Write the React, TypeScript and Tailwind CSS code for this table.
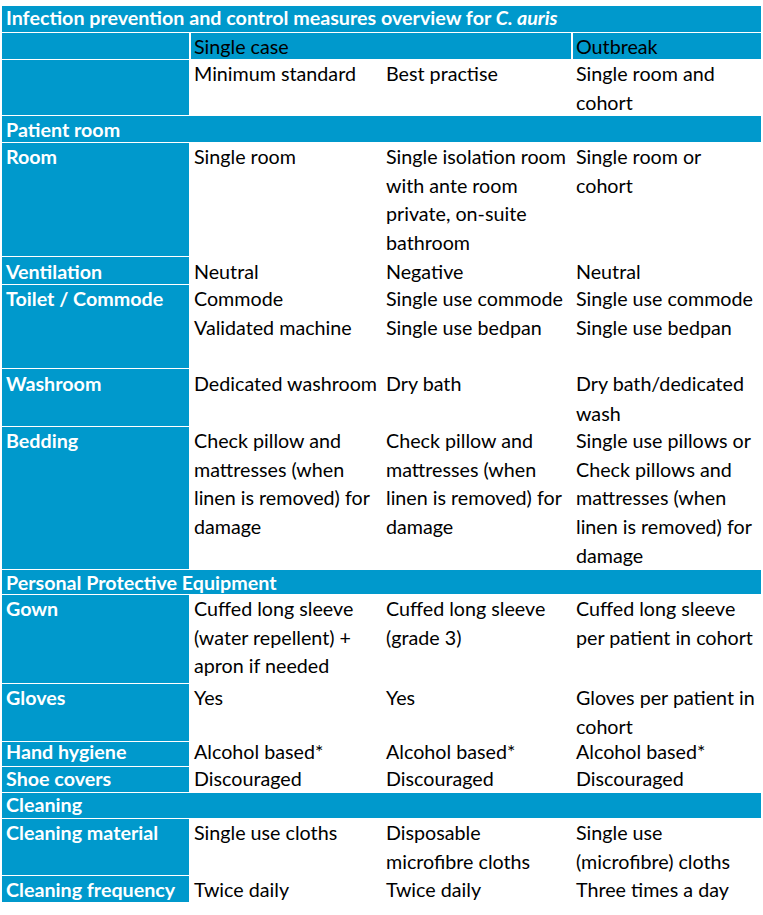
import React from "react";

type Row =
  | { kind: "section"; h: string; lead: string; title: React.ReactNode }
  | { kind: "data"; h: string; lead: string; label: string; cells: string[][] };

const rows: Row[] = [
  { kind: "section", h: "h-[26px]", lead: "leading-[28px]", title: "Patient room" },
  {
    kind: "data",
    h: "h-[113px]",
    lead: "leading-[28.7px]",
    label: "Room",
    cells: [
      ["Single room"],
      ["Single isolation room", "with ante room", "private, on-suite", "bathroom"],
      ["Single room or", "cohort"],
    ],
  },
  { kind: "data", h: "h-[27px]", lead: "leading-[29px]", label: "Ventilation", cells: [["Neutral"], ["Negative"], ["Neutral"]] },
  {
    kind: "data",
    h: "h-[83px]",
    lead: "leading-[28.7px]",
    label: "Toilet / Commode",
    cells: [
      ["Commode", "Validated machine"],
      ["Single use commode", "Single use bedpan"],
      ["Single use commode", "Single use bedpan"],
    ],
  },
  {
    kind: "data",
    h: "h-[57px]",
    lead: "leading-[29.5px]",
    label: "Washroom",
    cells: [["Dedicated washroom"], ["Dry bath"], ["Dry bath/dedicated", "wash"]],
  },
  {
    kind: "data",
    h: "h-[142px]",
    lead: "leading-[28.7px]",
    label: "Bedding",
    cells: [
      ["Check pillow and", "mattresses (when", "linen is removed) for", "damage"],
      ["Check pillow and", "mattresses (when", "linen is removed) for", "damage"],
      ["Single use pillows or", "Check pillows and", "mattresses (when", "linen is removed) for", "damage"],
    ],
  },
  { kind: "section", h: "h-[24px]", lead: "leading-[25px]", title: "Personal Protective Equipment" },
  {
    kind: "data",
    h: "h-[88px]",
    lead: "leading-[28.7px]",
    label: "Gown",
    cells: [
      ["Cuffed long sleeve", "(water repellent) +", "apron if needed"],
      ["Cuffed long sleeve", "(grade 3)"],
      ["Cuffed long sleeve", "per patient in cohort"],
    ],
  },
  {
    kind: "data",
    h: "h-[57px]",
    lead: "leading-[28.7px]",
    label: "Gloves",
    cells: [["Yes"], ["Yes"], ["Gloves per patient in", "cohort"]],
  },
  {
    kind: "data",
    h: "h-[24px]",
    lead: "leading-[20px]",
    label: "Hand hygiene",
    cells: [["Alcohol based*"], ["Alcohol based*"], ["Alcohol based*"]],
  },
  {
    kind: "data",
    h: "h-[25px]",
    lead: "leading-[24px]",
    label: "Shoe covers",
    cells: [["Discouraged"], ["Discouraged"], ["Discouraged"]],
  },
  { kind: "section", h: "h-[25px]", lead: "leading-[24px]", title: "Cleaning" },
  {
    kind: "data",
    h: "h-[56px]",
    lead: "leading-[28.7px]",
    label: "Cleaning material",
    cells: [["Single use cloths"], ["Disposable", "microfibre cloths"], ["Single use", "(microfibre) cloths"]],
  },
  {
    kind: "data",
    h: "h-[26px]",
    lead: "leading-[28px]",
    label: "Cleaning frequency",
    cells: [["Twice daily"], ["Twice daily"], ["Three times a day"]],
  },
];

const grid = "grid grid-cols-[187px_189px_189px_188px] grid-rows-1 gap-x-[2px]";

function Lines({ lines }: { lines: string[] }) {
  return (
    <>
      {lines.map((l, i) => (
        <div key={i} className="whitespace-nowrap">
          {l}
        </div>
      ))}
    </>
  );
}

export default function App() {
  return (
    <div className="w-[763px] h-[915px] bg-white pt-[6px] pl-[2px] font-['Lato',sans-serif] text-[19.7px] text-black">
      <div className="flex flex-col gap-y-px w-[759px]">
        <div className="h-[26px] bg-[#0099cc] pl-[4px] leading-[24px] font-bold text-white whitespace-nowrap">
          Infection prevention and control measures overview for <i>C. auris</i>
        </div>
        <div className={`${grid} h-[26px] leading-[28px]`}>
          <div className="bg-[#0099cc]" />
          <div className="col-span-2 bg-[#0099cc] pl-[3px]">Single case</div>
          <div className="bg-[#0099cc] pl-[3px]">Outbreak</div>
        </div>
        <div className={`${grid} h-[55px] leading-[28.7px]`}>
          <div className="bg-[#0099cc]" />
          <div className="pl-[3px]">
            <Lines lines={["Minimum standard"]} />
          </div>
          <div className="pl-[4px]">
            <Lines lines={["Best practise"]} />
          </div>
          <div className="pl-[3px]">
            <Lines lines={["Single room and", "cohort"]} />
          </div>
        </div>
        {rows.map((r, i) =>
          r.kind === "section" ? (
            <div key={i} className={`${r.h} ${r.lead} bg-[#0099cc] pl-[4px] font-bold text-white`}>
              {r.title}
            </div>
          ) : (
            <div key={i} className={`${grid} ${r.h} ${r.lead}`}>
              <div className="min-h-0 bg-[#0099cc] pl-[4px] font-bold text-white whitespace-nowrap">{r.label}</div>
              <div className="min-h-0 pl-[3px]">
                <Lines lines={r.cells[0]} />
              </div>
              <div className="min-h-0 pl-[4px]">
                <Lines lines={r.cells[1]} />
              </div>
              <div className="min-h-0 pl-[3px]">
                <Lines lines={r.cells[2]} />
              </div>
            </div>
          )
        )}
      </div>
    </div>
  );
}
